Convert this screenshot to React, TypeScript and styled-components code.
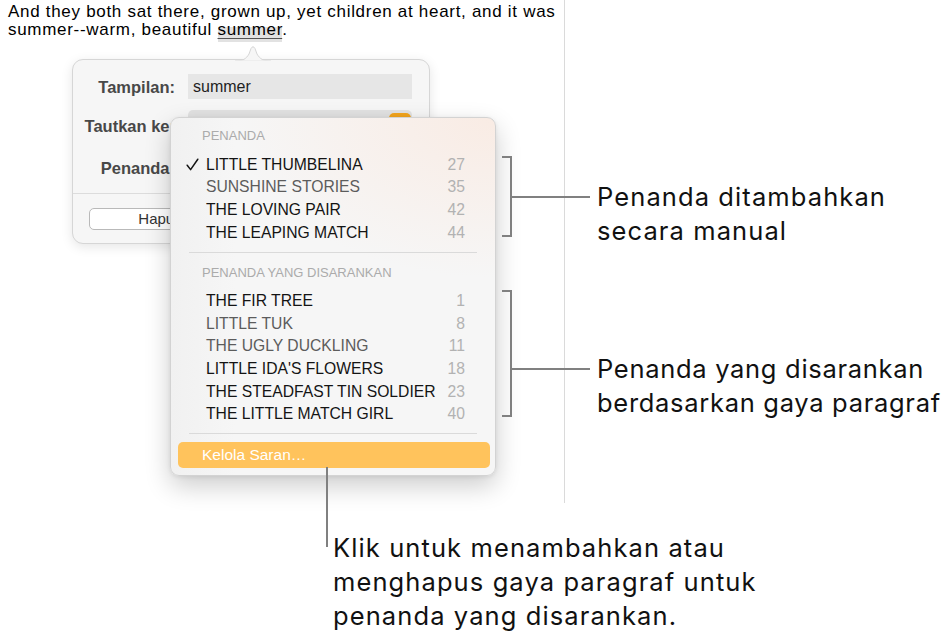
import React from "react";
import styled, { createGlobalStyle } from "styled-components";

const GlobalStyle = createGlobalStyle`
  html, body { margin: 0; padding: 0; background: #fff; }
  body { font-family: "Liberation Sans", Arial, sans-serif; -webkit-font-smoothing: antialiased; }
`;

const Page = styled.div`
  position: relative;
  width: 947px;
  height: 638px;
  overflow: hidden;
  background: #fff;
`;

const DocText = styled.p`
  margin: 0;
  padding: 3px 0 0 8px;
  width: 556px;
  font: 17px/18px "Liberation Sans", Arial, sans-serif;
  letter-spacing: 0.7px;
  color: #000;
  white-space: nowrap;
`;

const Selected = styled.span`
  padding-bottom: 3px;
  background: linear-gradient(to bottom, transparent 7px, #e2e2e2 7px);
  text-decoration: underline;
  text-decoration-color: #555;
  text-underline-offset: 3px;
`;

const PageEdge = styled.div`
  position: absolute;
  left: 564px;
  top: 0;
  width: 1px;
  height: 503px;
  background: #dadada;
`;

const Popover = styled.div`
  position: absolute;
  left: 72px;
  top: 59px;
  width: 358px;
  box-sizing: border-box;
  background: #f6f6f6;
  border: 1px solid #d6d6d6;
  border-radius: 11px;
  box-shadow: 0 3px 12px rgba(0, 0, 0, 0.1);
  padding: 14px 0 13px;
  display: flex;
  flex-direction: column;
`;

const Arrow = styled.svg`
  position: absolute;
  left: 162px;
  top: -15px;
  width: 36px;
  height: 16px;
  overflow: visible;
`;

const FormRow = styled.div<{ $h: number; $mt?: number }>`
  display: grid;
  grid-template-columns: 102px 224px;
  column-gap: 13px;
  align-items: center;
  height: ${(p) => p.$h}px;
  margin-top: ${(p) => p.$mt ?? 0}px;
`;

const Label = styled.div`
  text-align: right;
  font: bold 16.5px/20px "Liberation Sans", Arial, sans-serif;
  color: #484848;
  white-space: nowrap;
`;

const TextField = styled.div`
  height: 25px;
  background: #e6e6e6;
  padding-left: 5px;
  font: 16px/25px "Liberation Sans", Arial, sans-serif;
  color: #1e1e1e;
`;

const PopupField = styled.div`
  position: relative;
  align-self: start;
  height: 30px;
  background: #e2e2e2;
  border-radius: 5px;
`;

const PopupKnob = styled.div`
  position: absolute;
  right: 1px;
  top: 3px;
  width: 22px;
  height: 24px;
  border-radius: 5px;
  background: #f3a51d;
`;

const Divider = styled.div`
  height: 1px;
  background: #dcdcdc;
  margin: 9px 0 14px;
`;

const ButtonRow = styled.div`
  display: flex;
  padding-left: 16px;
`;

const PlainButton = styled.div`
  width: 142px;
  height: 22px;
  box-sizing: border-box;
  border: 1px solid #b9b9b9;
  border-radius: 5px;
  background: #fff;
  text-align: center;
  font: 15px/20px "Liberation Sans", Arial, sans-serif;
  color: #333;
`;

const Menu = styled.div`
  position: absolute;
  left: 170px;
  top: 117px;
  width: 326px;
  box-sizing: border-box;
  padding: 8px 0 7px;
  border: 1px solid #d3d3d3;
  border-radius: 9px;
  background: radial-gradient(ellipse 260px 160px at 100% 0%, rgba(250, 232, 222, 0.75), rgba(246, 240, 236, 0) 100%),
    linear-gradient(90deg, #f1f1f1 0%, #f6f6f6 20%, #f6f6f6 100%);
  box-shadow: 0 10px 26px rgba(0, 0, 0, 0.2), 0 1px 4px rgba(0, 0, 0, 0.08);
  font-family: "Liberation Sans", Arial, sans-serif;
`;

const MenuHeader = styled.div<{ $mt?: number }>`
  height: 20px;
  line-height: 20px;
  padding-left: 31px;
  margin-top: ${(p) => p.$mt ?? 0}px;
  font-size: 13px;
  color: #ababab;
`;

const ItemList = styled.div<{ $pt: number }>`
  padding-top: ${(p) => p.$pt}px;
  display: flex;
  flex-direction: column;
`;

const Item = styled.div<{ $dim?: boolean }>`
  display: grid;
  grid-template-columns: 35px 1fr auto;
  align-items: center;
  height: 22.6px;
  padding-right: 30px;
  font-size: 15.7px;
  color: ${(p) => (p.$dim ? "#5c5c5c" : "#141414")};
  white-space: nowrap;
`;

const CheckCell = styled.div`
  display: flex;
  align-items: center;
  padding-left: 15px;
`;

const Count = styled.span`
  color: #b2b2b2;
  text-align: right;
`;

const MenuSeparator = styled.div<{ $mt: number }>`
  height: 1px;
  background: #dadada;
  margin: ${(p) => p.$mt}px 18px 0;
`;

const HighlightItem = styled.div`
  margin: 7.5px 5px 0 7px;
  height: 26px;
  border-radius: 5px;
  background: #ffc35c;
  padding-left: 24px;
  font-size: 15.5px;
  line-height: 26px;
  color: #fff;
`;

const Callout = styled.div<{ $x: number; $y: number }>`
  position: absolute;
  left: ${(p) => p.$x}px;
  top: ${(p) => p.$y}px;
  display: flex;
  align-items: flex-start;
`;

const Bracket = styled.div<{ $h: number }>`
  width: 10px;
  height: ${(p) => p.$h}px;
  box-sizing: border-box;
  border: 2px solid #808080;
  border-left: none;
`;

const Leader = styled.div<{ $w: number; $mt: number }>`
  width: ${(p) => p.$w}px;
  height: 2px;
  margin-top: ${(p) => p.$mt}px;
  background: #808080;
`;

const VLeader = styled.div<{ $h: number }>`
  width: 2px;
  height: ${(p) => p.$h}px;
  background: #808080;
`;

const CalloutText = styled.div<{ $mt: number; $ml: number; $ls?: number }>`
  margin-top: ${(p) => p.$mt}px;
  margin-left: ${(p) => p.$ml}px;
  font: 25.5px/34px Inter, "Liberation Sans", sans-serif;
  letter-spacing: ${(p) => p.$ls ?? 1.1}px;
  color: #111;
  white-space: nowrap;
`;

const Check = () => (
  <svg width="13" height="13" viewBox="0 0 13 13">
    <path d="M1.2 7.2 L4.6 11.6 L11.8 1.2" fill="none" stroke="#141414" strokeWidth="1.5" strokeLinecap="round" strokeLinejoin="round" />
  </svg>
);

type Entry = { name: string; n: number; dim?: boolean; checked?: boolean };

const manual: Entry[] = [
  { name: "LITTLE THUMBELINA", n: 27, checked: true },
  { name: "SUNSHINE STORIES", n: 35, dim: true },
  { name: "THE LOVING PAIR", n: 42 },
  { name: "THE LEAPING MATCH", n: 44 },
];

const suggested: Entry[] = [
  { name: "THE FIR TREE", n: 1 },
  { name: "LITTLE TUK", n: 8, dim: true },
  { name: "THE UGLY DUCKLING", n: 11, dim: true },
  { name: "LITTLE IDA'S FLOWERS", n: 18 },
  { name: "THE STEADFAST TIN SOLDIER", n: 23 },
  { name: "THE LITTLE MATCH GIRL", n: 40 },
];

const Rows = ({ items }: { items: Entry[] }) => (
  <>
    {items.map((e) => (
      <Item key={e.name} $dim={e.dim}>
        <CheckCell>{e.checked ? <Check /> : null}</CheckCell>
        <span>{e.name}</span>
        <Count>{e.n}</Count>
      </Item>
    ))}
  </>
);

export default function App() {
  return (
    <Page>
      <GlobalStyle />
      <DocText>
        And they both sat there, grown up, yet children at heart, and it was
        <br />
        summer--warm, beautiful <Selected>summer</Selected>.
      </DocText>
      <PageEdge />

      <Popover>
        <Arrow viewBox="0 0 36 16">
          <path
            d="M0 16 C8 16 11 14 14 9 L16 3.5 Q18 0 20 3.5 L22 9 C25 14 28 16 36 16 Z"
            fill="#f6f6f6"
            stroke="#d6d6d6"
            strokeWidth="1"
          />
          <rect x="-1" y="15.5" width="38" height="2" fill="#f6f6f6" />
        </Arrow>
        <FormRow $h={25}>
          <Label>Tampilan:</Label>
          <TextField>summer</TextField>
        </FormRow>
        <FormRow $h={32} $mt={11}>
          <Label>Tautkan ke:</Label>
          <PopupField>
            <PopupKnob />
          </PopupField>
        </FormRow>
        <FormRow $h={32} $mt={10}>
          <Label>Penanda:</Label>
          <div />
        </FormRow>
        <Divider />
        <ButtonRow>
          <PlainButton>Hapus</PlainButton>
        </ButtonRow>
      </Popover>

      <Menu>
        <MenuHeader>PENANDA</MenuHeader>
        <ItemList $pt={7.5}>
          <Rows items={manual} />
        </ItemList>
        <MenuSeparator $mt={8} />
        <MenuHeader $mt={10}>PENANDA YANG DISARANKAN</MenuHeader>
        <ItemList $pt={7}>
          <Rows items={suggested} />
        </ItemList>
        <MenuSeparator $mt={8} />
        <HighlightItem>Kelola Saran…</HighlightItem>
      </Menu>

      <Callout $x={502} $y={156}>
        <Bracket $h={81} />
        <Leader $w={78} $mt={40} />
        <CalloutText $mt={24} $ml={7}>
          Penanda ditambahkan
          <br />
          secara manual
        </CalloutText>
      </Callout>

      <Callout $x={502} $y={290}>
        <Bracket $h={127} />
        <Leader $w={78} $mt={78} />
        <CalloutText $mt={62} $ml={7} $ls={0.7}>
          Penanda yang disarankan
          <br />
          berdasarkan gaya paragraf
        </CalloutText>
      </Callout>

      <Callout $x={326} $y={467}>
        <VLeader $h={80} />
        <CalloutText $mt={64} $ml={5}>
          Klik untuk menambahkan atau
          <br />
          menghapus gaya paragraf untuk
          <br />
          penanda yang disarankan.
        </CalloutText>
      </Callout>
    </Page>
  );
}
